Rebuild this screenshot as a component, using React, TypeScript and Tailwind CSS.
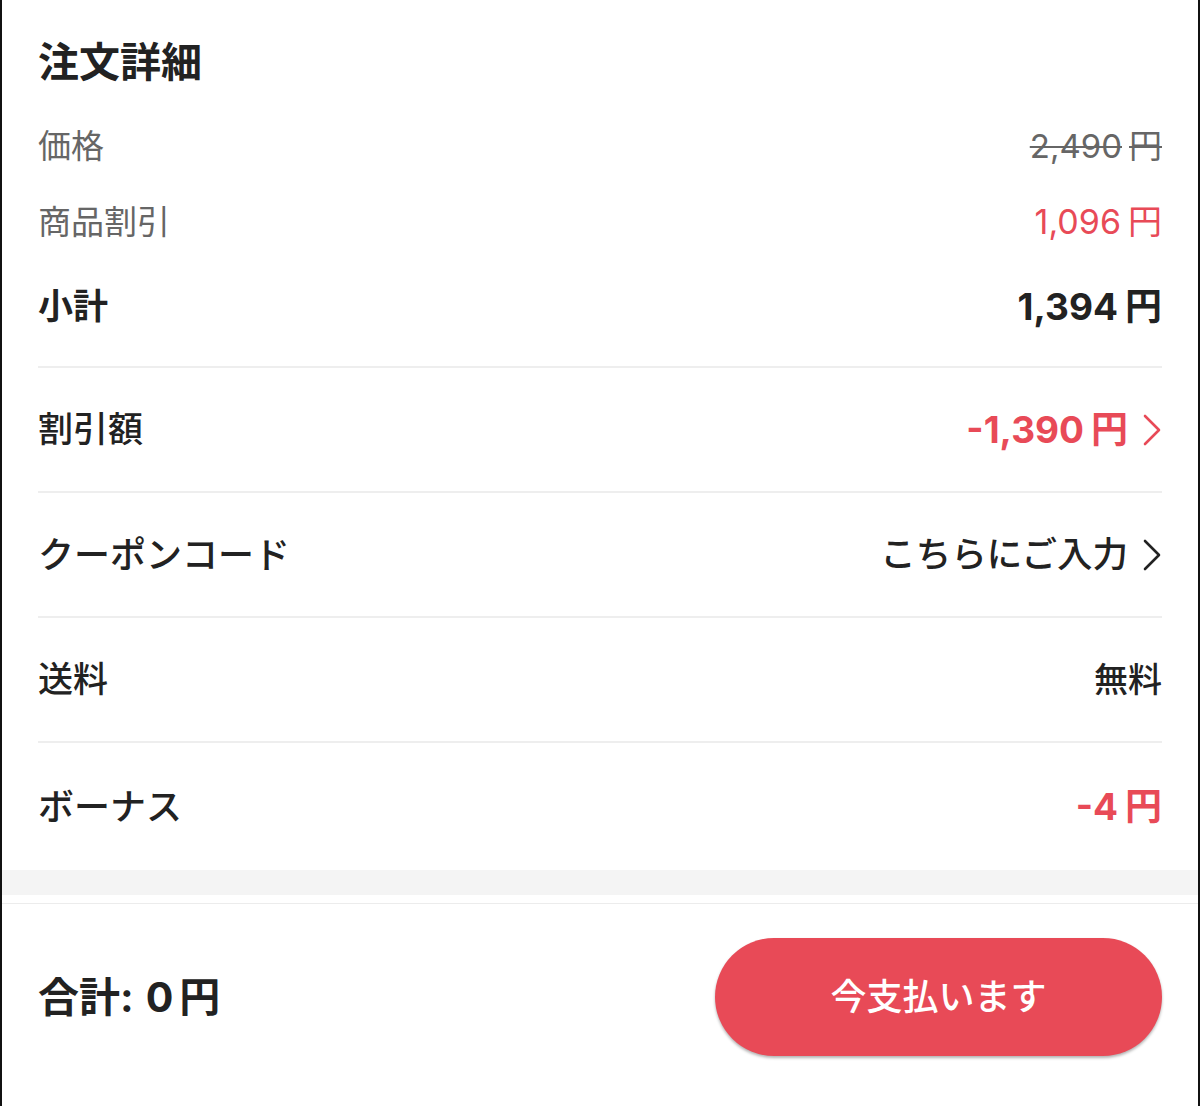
import { FC, ReactNode } from "react";

const font = { fontFamily: "Inter, 'Noto Sans CJK JP', sans-serif" };

const Chevron: FC<{ color: string }> = ({ color }) => (
	<svg width="20" height="32" viewBox="0 0 20 32" fill="none" className="ml-[14px]">
		<polyline points="3,2 17,16 3,30" stroke={color} strokeWidth="2.6" strokeLinecap="round" strokeLinejoin="round" />
	</svg>
);

// amount + yen sign with a narrow gap
const Yen: FC<{ n: string; className: string }> = ({ n, className }) => (
	<span className={`leading-none ${className}`}>
		{n}
		<span className="ml-[7px]">円</span>
	</span>
);

const Row: FC<{ label: ReactNode; value: ReactNode; border?: boolean; h: string }> = ({ label, value, border = true, h }) => (
	<div className={`flex items-center justify-between ${h} ${border ? "border-b-2 border-[#eeeeee]" : ""}`}>
		<span className="text-[35px] leading-none font-medium text-[#222]">{label}</span>
		<div className="flex items-center">{value}</div>
	</div>
);

const App: FC = () => {
	return (
		<div style={font} className="w-[1200px] h-[1106px] bg-white border-x-2 border-[#111] flex flex-col overflow-hidden">
			<div className="mx-[36px] pt-[24px] pb-[22px] border-b-2 border-[#eeeeee]">
				<div className="h-[76px] flex items-center">
					<h1 className="text-[41px] leading-none font-bold text-[#222]">注文詳細</h1>
				</div>
				<div className="mt-[8px] h-[76px] flex items-center justify-between">
					<span className="text-[33px] leading-none text-[#666]">価格</span>
					<Yen n="2,490" className="text-[33px] text-[#666] line-through decoration-2" />
				</div>
				<div className="h-[76px] flex items-center justify-between">
					<span className="text-[33px] leading-none text-[#666]">商品割引</span>
					<Yen n="1,096" className="text-[34px] text-[#e84a57]" />
				</div>
				<div className="mt-[8px] h-[76px] flex items-center justify-between">
					<span className="text-[35px] leading-none font-bold text-[#222]">小計</span>
					<Yen n="1,394" className="text-[37px] font-bold text-[#222]" />
				</div>
			</div>
			<div className="mx-[36px]">
				<Row
					h="h-[125px]"
					label="割引額"
					value={
						<>
							<Yen n="-1,390" className="text-[37px] font-bold text-[#e84a57]" />
							<Chevron color="#e84a57" />
						</>
					}
				/>
				<Row
					h="h-[125px]"
					label={<span className="text-[36px]">クーポンコード</span>}
					value={
						<>
							<span className="text-[35.5px] leading-none font-medium text-[#222]">こちらにご入力</span>
							<Chevron color="#222" />
						</>
					}
				/>
				<Row h="h-[125px]" label="送料" value={<span className="text-[34px] leading-none font-medium text-[#222]">無料</span>} />
				<Row
					h="h-[127px]"
					border={false}
					label={<span className="text-[36px]">ボーナス</span>}
					value={<Yen n="-4" className="text-[37px] font-bold text-[#e84a57]" />}
				/>
			</div>
			<div className="h-[25px] bg-[#f4f4f4]" />
			<div className="mt-[8px] border-t border-[#ececec] flex items-start justify-between px-[36px] pt-[34px]">
				<div className="h-[118px] flex items-center">
					<span className="text-[41px] leading-none font-bold text-[#222]">
						合計:<span className="ml-[12px]">0</span>
						<span className="ml-[6px]">円</span>
					</span>
				</div>
				<button className="w-[447px] h-[118px] rounded-full bg-[#e84a57] text-white text-[36px] font-medium leading-none shadow-[0_2px_3px_rgba(0,0,0,0.3)]">
					今支払います
				</button>
			</div>
		</div>
	);
};

export default App;
